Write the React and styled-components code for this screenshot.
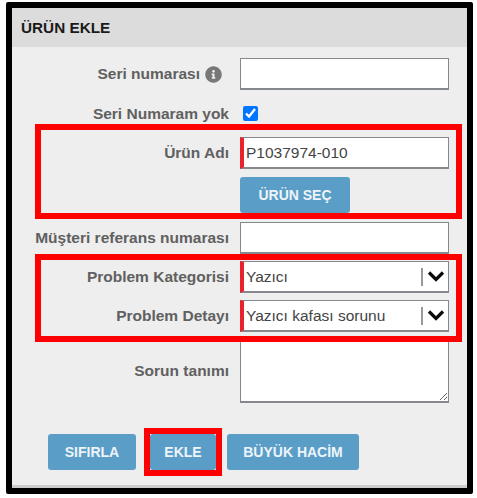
import React from "react";
import styled, { createGlobalStyle } from "styled-components";
import { FaInfoCircle } from "react-icons/fa";

const GlobalStyle = createGlobalStyle`
  html, body {
    margin: 0;
    padding: 0;
    background: #fff;
  }
  body {
    font-family: "Liberation Sans", Arial, sans-serif;
  }
`;

const Frame = styled.div`
  width: 467px;
  height: 492px;
  box-sizing: border-box;
  margin: 2px 0 0 6px;
  border: 6px solid #000;
  border-radius: 2px;
  background: #eee;
  display: flex;
  flex-direction: column;
`;

const Header = styled.h2`
  margin: 0;
  height: 39px;
  flex: none;
  padding-left: 9px;
  display: flex;
  align-items: center;
  background: #dcdcdc;
  color: #1a1a1a;
  font-size: 15.3px;
  font-weight: bold;
`;

const Form = styled.form`
  flex: 1;
  padding-top: 11px;
  border-bottom: 3px solid #ccc;
  display: flex;
  flex-direction: column;
  gap: 7px;
`;

const Group = styled.div`
  position: relative;
  display: flex;
  flex-direction: column;
  gap: 7px;
`;

const Row = styled.div`
  display: grid;
  grid-template-columns: 217px 209px;
  column-gap: 11px;
  min-height: ${(p) => p.$height || 32}px;
  margin-top: ${(p) => p.$top || 0}px;
`;

const Label = styled.label`
  display: flex;
  justify-content: flex-end;
  align-items: center;
  gap: 5px;
  color: #606060;
  font-size: 15.5px;
  font-weight: bold;
  height: ${(p) => (p.$full ? "100%" : "32px")};
`;

const InfoIcon = styled(FaInfoCircle)`
  width: 17px;
  height: 17px;
  margin-right: 7px;
  color: #777;
`;

const Field = styled.div`
  display: flex;
  flex-direction: column;
  gap: 8px;
`;

const TextInput = styled.input`
  width: 100%;
  height: 32px;
  box-sizing: border-box;
  margin: 0;
  padding: 0 0 0 ${(p) => (p.$required ? 2 : 5)}px;
  background: #fff;
  border: 1px solid #85898d;
  border-bottom-width: 2px;
  border-left: ${(p) => (p.$required ? "4px solid #e8232b" : "1px solid #85898d")};
  border-radius: 0;
  outline: none;
  color: #444;
  font-family: inherit;
  font-size: 15.5px;
`;

const CheckWrap = styled.div`
  display: flex;
  align-items: center;
  height: 100%;
  padding-left: 3px;
`;

const Check = styled.input`
  width: 15px;
  height: 15px;
  margin: 0;
  accent-color: #0075ff;
`;

const Select = styled.div`
  height: 32px;
  box-sizing: border-box;
  padding-left: 2px;
  background: #fff;
  border: 1px solid #85898d;
  border-bottom-width: 2px;
  border-left: 4px solid #e8232b;
  display: flex;
  align-items: center;
  color: #444;
  font-size: 15.5px;
`;

const SelectText = styled.span`
  flex: 1;
`;

const Divider = styled.span`
  width: 2px;
  height: 18px;
  background: #999;
`;

const Chevron = styled.svg`
  width: 18px;
  height: 12px;
  margin: 0 3px 2px 4px;
  flex: none;
`;

const TextArea = styled.textarea`
  width: 100%;
  height: 64px;
  box-sizing: border-box;
  margin: 0;
  display: block;
  background: #fff;
  border: 1px solid #85898d;
  border-bottom-width: 2px;
  border-radius: 0;
  outline: none;
  resize: both;
`;

const Button = styled.button`
  width: ${(p) => p.$width}px;
  height: 36px;
  padding: 0;
  border: 0;
  border-radius: 3px;
  background: #5a9ec8;
  color: #eef4f8;
  font-family: inherit;
  font-size: 14px;
  font-weight: bold;
`;

const Actions = styled.div`
  margin-top: 24px;
  padding-left: 36px;
  display: flex;
  gap: 14px;
  align-items: center;
`;

const ActionHighlight = styled.div`
  position: relative;
  margin-right: -3px;
`;

/* red annotation boxes drawn over the form */
const Highlight = styled.div`
  position: absolute;
  top: ${(p) => p.$top}px;
  bottom: ${(p) => p.$bottom}px;
  left: ${(p) => p.$left}px;
  right: ${(p) => p.$right}px;
  border: 6px solid #f00;
  pointer-events: none;
`;

function ChevronIcon() {
  return (
    <Chevron viewBox="0 0 18 12">
      <path d="M2 2.5 L9 9.5 L16 2.5" fill="none" stroke="#0a0a0a" strokeWidth="3.2" />
    </Chevron>
  );
}

export default function App() {
  return (
    <>
      <GlobalStyle />
      <Frame>
        <Header>ÜRÜN EKLE</Header>
        <Form>
          <Row>
            <Label>
              Seri numarası
              <InfoIcon />
            </Label>
            <TextInput />
          </Row>
          <Row $height={33}>
            <Label $full>Seri Numaram yok</Label>
            <CheckWrap>
              <Check type="checkbox" defaultChecked />
            </CheckWrap>
          </Row>
          <Group>
            <Row>
              <Label>Ürün Adı</Label>
              <Field>
                <TextInput $required defaultValue="P1037974-010" />
                <Button type="button" $width={110}>ÜRÜN SEÇ</Button>
              </Field>
            </Row>
            <Highlight $top={-13} $bottom={-6} $left={23} $right={5} />
          </Group>
          <Row $top={2}>
            <Label>Müşteri referans numarası</Label>
            <TextInput />
          </Row>
          <Group>
            <Row>
              <Label>Problem Kategorisi</Label>
              <Select>
                <SelectText>Yazıcı</SelectText>
                <Divider />
                <ChevronIcon />
              </Select>
            </Row>
            <Row>
              <Label>Problem Detayı</Label>
              <Select>
                <SelectText>Yazıcı kafası sorunu</SelectText>
                <Divider />
                <ChevronIcon />
              </Select>
            </Row>
            <Highlight $top={-7} $bottom={-10} $left={23} $right={5} />
          </Group>
          <Row>
            <Label $full>Sorun tanımı</Label>
            <TextArea />
          </Row>
          <Actions>
            <Button type="button" $width={88}>SIFIRLA</Button>
            <ActionHighlight>
              <Button type="button" $width={66}>EKLE</Button>
              <Highlight $top={-6} $bottom={-6} $left={-6} $right={-6} />
            </ActionHighlight>
            <Button type="button" $width={132}>BÜYÜK HACİM</Button>
          </Actions>
        </Form>
      </Frame>
    </>
  );
}
